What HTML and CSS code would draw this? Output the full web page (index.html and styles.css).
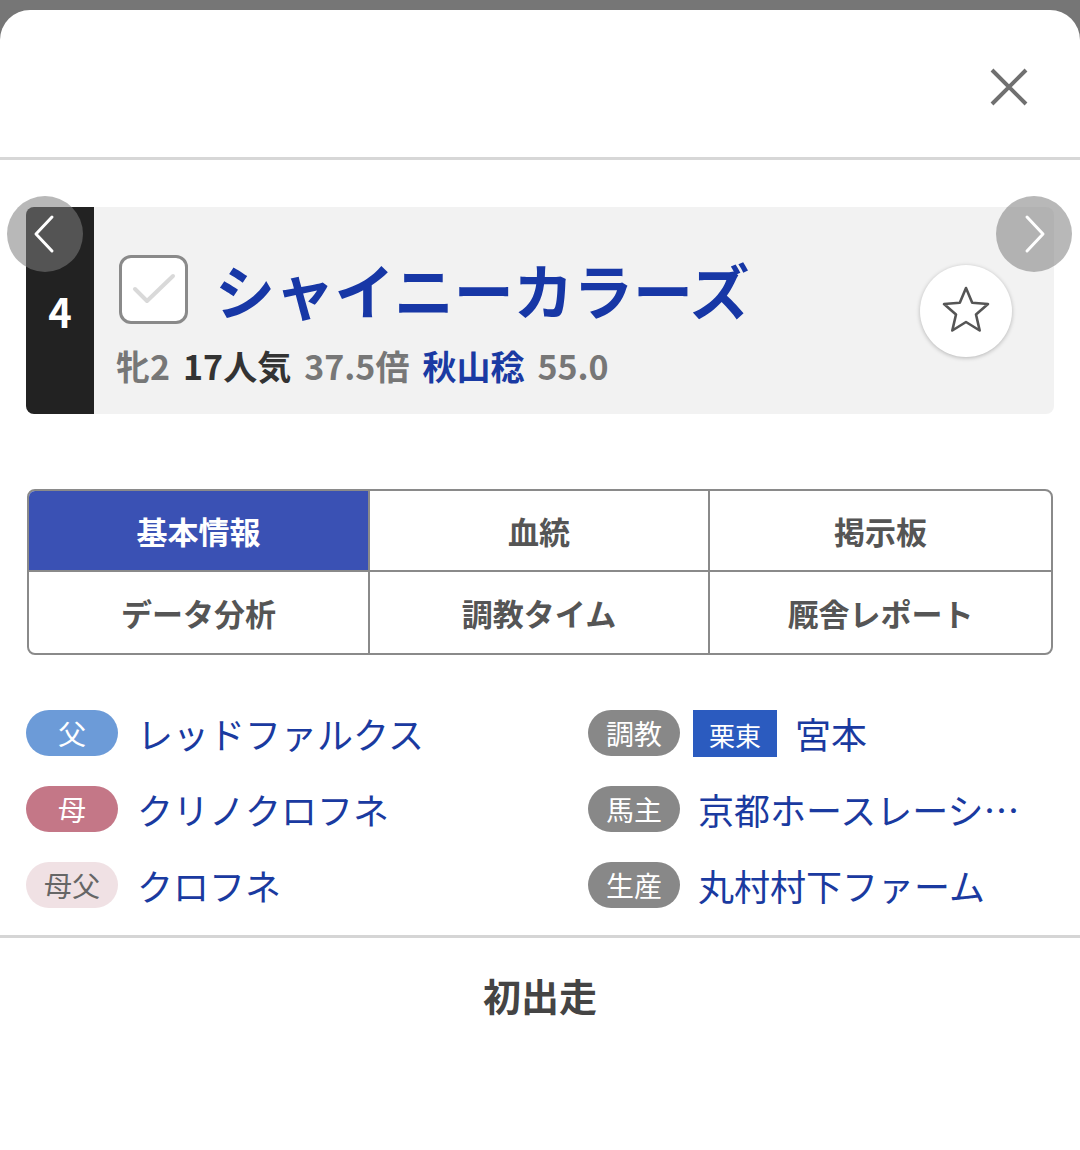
FILE: index.html
```html
<!DOCTYPE html>
<html lang="ja">
<head>
<meta charset="utf-8">
<title>出走馬情報</title>
<link rel="stylesheet" href="styles.css">
</head>
<body>
<div class="sheet">
  <header class="sheet-head">
    <button class="close" aria-label="閉じる">
      <svg width="40" height="40" viewBox="0 0 40 40"><path d="M3 3 L37 37 M37 3 L3 37" stroke="#707070" stroke-width="4" fill="none"/></svg>
    </button>
  </header>

  <section class="card-wrap">
    <div class="card">
      <div class="num">4</div>
      <div class="card-body">
        <div class="card-main">
          <div class="name-row">
            <span class="check">
              <svg width="44" height="34" viewBox="0 0 44 34"><path d="M3 17 L15 29 L41 4" stroke="#d9d9d9" stroke-width="4" fill="none" stroke-linecap="round" stroke-linejoin="round"/></svg>
            </span>
            <h1 class="name">シャイニーカラーズ</h1>
          </div>
          <div class="sub">
            <span class="g">牝2</span>
            <span class="d">17人気</span>
            <span class="g">37.5倍</span>
            <span class="b">秋山稔</span>
            <span class="g">55.0</span>
          </div>
        </div>
        <button class="fav" aria-label="お気に入り">
          <svg width="52" height="50" viewBox="0 0 52 50"><path d="M26 3 L32.2 17.8 L48 19 L36 29.5 L39.7 45.5 L26 37 L12.3 45.5 L16 29.5 L4 19 L19.8 17.8 Z" stroke="#555" stroke-width="2.6" fill="none" stroke-linejoin="round"/></svg>
        </button>
      </div>
      <button class="nav prev" aria-label="前へ">
        <svg width="24" height="40" viewBox="0 0 24 40"><path d="M20 3 L4 20 L20 37" stroke="#fff" stroke-width="3" fill="none" stroke-linecap="round" stroke-linejoin="round"/></svg>
      </button>
      <button class="nav next" aria-label="次へ">
        <svg width="24" height="40" viewBox="0 0 24 40"><path d="M4 3 L20 20 L4 37" stroke="#fff" stroke-width="3" fill="none" stroke-linecap="round" stroke-linejoin="round"/></svg>
      </button>
    </div>
  </section>

  <nav class="tabs">
    <div class="tab active">基本情報</div>
    <div class="tab">血統</div>
    <div class="tab">掲示板</div>
    <div class="tab">データ分析</div>
    <div class="tab">調教タイム</div>
    <div class="tab">厩舎レポート</div>
  </nav>

  <section class="info">
    <div class="col">
      <div class="row"><span class="pill sire">父</span><span class="val">レッドファルクス</span></div>
      <div class="row"><span class="pill dam">母</span><span class="val">クリノクロフネ</span></div>
      <div class="row"><span class="pill damsire">母父</span><span class="val">クロフネ</span></div>
    </div>
    <div class="col">
      <div class="row"><span class="pill gray">調教</span><span class="area">栗東</span><span class="val">宮本</span></div>
      <div class="row"><span class="pill gray">馬主</span><span class="val">京都ホースレーシ…</span></div>
      <div class="row"><span class="pill gray">生産</span><span class="val">丸村村下ファーム</span></div>
    </div>
  </section>

  <section class="history">
    <p class="first">初出走</p>
  </section>
</div>
</body>
</html>
```

FILE: styles.css
```css
* { box-sizing: border-box; }
html, body { margin: 0; padding: 0; }
body {
  background: #767676;
  font-family: "Noto Sans CJK JP", "Noto Sans", sans-serif;
  width: 1080px;
  height: 1150px;
  overflow: hidden;
}
button { font: inherit; border: 0; padding: 0; background: none; cursor: pointer; }

.sheet {
  margin-top: 10px;
  background: #fff;
  border-radius: 30px 30px 0 0;
  height: 1140px;
}

.sheet-head {
  height: 150px;
  border-bottom: 3px solid #d7d7d7;
  display: flex;
  justify-content: flex-end;
  align-items: center;
  padding: 6px 51px 0 0;
}
.close { width: 40px; height: 40px; display: flex; }

.card-wrap { padding: 47px 26px 0; }
.card {
  position: relative;
  display: flex;
  height: 207px;
  background: #f2f2f2;
  border-radius: 8px;
}
.num {
  width: 68px;
  background: #222;
  color: #fff;
  border-radius: 8px 0 0 8px;
  font-size: 40px;
  font-weight: 700;
  display: flex;
  align-items: center;
  justify-content: center;
}
.card-body {
  flex: 1;
  display: flex;
  align-items: center;
  justify-content: space-between;
  padding: 0 42px 0 25px;
}
.card-main {
  align-self: flex-start;
  display: flex;
  flex-direction: column;
  padding-top: 46px;
}
.name-row { display: flex; align-items: center; gap: 27px; }
.check {
  width: 69px;
  height: 69px;
  border: 3px solid #8a8a8a;
  border-radius: 12px;
  background: #fff;
  display: flex;
  align-items: center;
  justify-content: center;
}
.name {
  margin: 0;
  font-size: 60px;
  font-weight: 700;
  color: #1737a6;
  line-height: 72px;
  letter-spacing: -0.3px;
}
.sub {
  margin-top: 19px;
  font-size: 34px;
  font-weight: 700;
  line-height: 44px;
  display: flex;
  gap: 13px;
  margin-left: -3px;
}
.sub .g { color: #777; }
.sub .d { color: #333; }
.sub .b { color: #1a3aa3; }

.fav {
  width: 92px;
  height: 92px;
  border-radius: 50%;
  background: #fff;
  box-shadow: 0 1px 4px rgba(0,0,0,0.25);
  display: flex;
  align-items: center;
  justify-content: center;
}
.fav svg { margin-top: -2px; }

.nav {
  position: absolute;
  top: -11px;
  width: 76px;
  height: 76px;
  border-radius: 50%;
  background: rgba(126,126,126,0.55);
  display: flex;
  align-items: center;
  justify-content: center;
}
.nav.prev { left: -19px; }
.nav.prev svg { margin-left: -2px; }
.nav.next { right: -18px; }
.nav.next svg { margin-left: 2px; }

.tabs {
  margin: 75px 27px 0;
  display: grid;
  grid-template-columns: 341px 340px 1fr;
  grid-auto-rows: 81px;
  border: 2px solid #8a8a8a;
  border-radius: 8px;
  overflow: hidden;
}
.tab {
  display: flex;
  align-items: center;
  justify-content: center;
  font-size: 31px;
  font-weight: 700;
  color: #555;
  border-right: 2px solid #8a8a8a;
  border-bottom: 2px solid #8a8a8a;
}
.tab:nth-child(3n) { border-right: 0; }
.tab:nth-child(n+4) { border-bottom: 0; }
.tab.active { background: #3a51b4; color: #fff; }

.info {
  margin-top: 55px;
  padding: 0 26px;
  display: grid;
  grid-template-columns: 562px 1fr;
}
.col { display: flex; flex-direction: column; gap: 30px; }
.row { display: flex; align-items: center; height: 46px; min-width: 0; }
.pill {
  flex: none;
  width: 92px;
  height: 46px;
  border-radius: 23px;
  display: flex;
  align-items: center;
  justify-content: center;
  font-size: 28px;
  color: #fff;
  margin-right: 19px;
}
.pill.sire { background: #6c9bd8; }
.pill.dam { background: #c47787; }
.pill.damsire { background: #f0e1e4; color: #666; }
.pill.gray { background: #888; margin-right: 18px; }
.area {
  flex: none;
  width: 84px;
  height: 47px;
  background: #2b5bbf;
  color: #fff;
  font-size: 26px;
  display: flex;
  align-items: center;
  justify-content: center;
  margin-left: -5px;
  margin-right: 18px;
  padding-top: 2px;
}
.val {
  font-size: 36px;
  color: #1a3aa0;
  white-space: nowrap;
  line-height: 46px;
}

.history {
  margin-top: 27px;
  border-top: 3px solid #d5d5d5;
  display: flex;
  justify-content: center;
}
.first {
  margin: 31px 0 0;
  font-size: 38px;
  font-weight: 700;
  color: #444;
  line-height: 52px;
}
```
